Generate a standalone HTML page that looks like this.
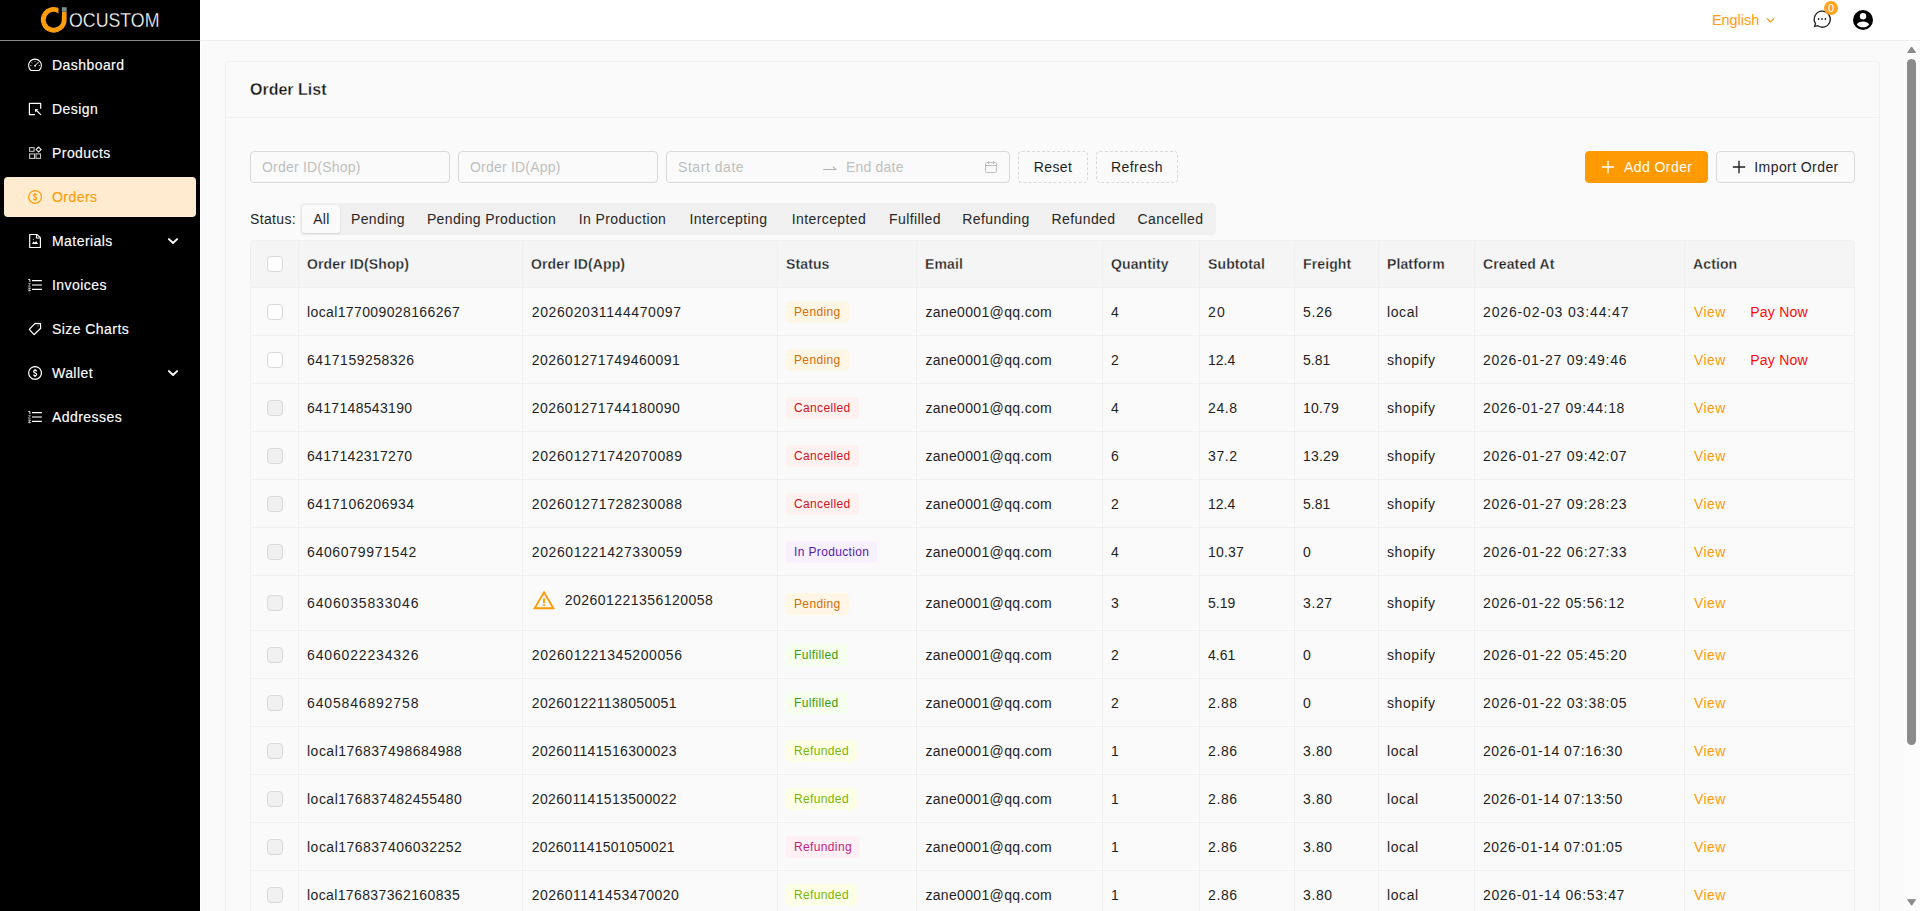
<!DOCTYPE html>
<html lang="en">
<head>
<meta charset="utf-8">
<title>Order List</title>
<style>
*{box-sizing:border-box;margin:0;padding:0}
html,body{width:1920px;height:911px;overflow:hidden}
body{font-family:"Liberation Sans",sans-serif;font-size:14px;color:#1f1f1f;background:#fafafa;position:relative}
a{text-decoration:none;cursor:pointer}
/* sidebar */
.side{position:absolute;left:0;top:0;width:200px;height:911px;background:#000;color:#fff}
.logo{height:41px;border-bottom:1px solid #8a8a8a;position:relative}
.logo svg{position:absolute;left:0;top:0}
.menu{padding-top:0}
.mi{position:relative;height:40px;margin:4px 4px;border-radius:4px;display:flex;align-items:center;padding-left:24px;font-size:14px;color:#fff;letter-spacing:0.44px;-webkit-text-stroke:0.14px currentColor}
.mi svg.ic{width:14px;height:14px;flex:none;margin-right:10px}
.mi.act{background:#ffebcf;color:#ff9d0a}
.mi .arr{position:absolute;left:163px;top:16px;width:12px;height:8px}
/* header */
.hdr{position:absolute;left:200px;top:0;width:1720px;height:41px;background:#fff;border-bottom:1px solid #efefef}
.lang{position:absolute;left:1512px;top:0;line-height:40px;color:#ff9a0a;font-size:14.4px}
/* main */
.main{position:absolute;left:200px;top:41px;width:1704px;height:870px;background:#fafafa;border-left:1px solid #fff;border-top-left-radius:5px}
.card{position:absolute;left:24px;top:20px;width:1655px;height:900px;border:1px solid #f0f0f0;border-bottom:none;border-radius:4px 4px 0 0;background:#fafafa}
.chead{height:56px;border-bottom:1px solid #f0f0f0;padding-left:24px;line-height:55px;font-size:16px;font-weight:700;color:#141414;-webkit-text-stroke:0.3px #fafafa}
.tools{position:absolute;left:24px;top:89px;height:32px;width:1605px}
.inp{position:absolute;top:0;height:32px;border:1px solid #d9d9d9;border-radius:4px;color:#bfbfbf;line-height:30px;padding-left:11px;font-size:14px;letter-spacing:0.2px;background:#fafafa}
.btn{position:absolute;top:0;height:32px;border:1px solid #d9d9d9;border-radius:4px;line-height:30px;text-align:center;font-size:14px;color:#1f1f1f;background:#fafafa;letter-spacing:0.42px}
.btn.dash{border-style:dashed}
.btn.pri{background:#ff9a03;border-color:#ff9a03;color:#fff}
.status{position:absolute;left:24px;top:141px;height:32px;line-height:32px;font-size:14px;letter-spacing:0.35px}
.seg{position:absolute;left:50px;top:0;height:32px;width:916px;background:#f0f0f0;border-radius:4px;padding:2px;display:flex}
.seg span{height:28px;line-height:28px;text-align:center;border-radius:3px;padding-left:1px;letter-spacing:0.39px;color:#262626;flex:none}
.seg span.on{background:#fafafa;box-shadow:0 1px 2px rgba(0,0,0,.1),0 0 2px rgba(0,0,0,.05)}
/* table */
.tbl{position:absolute;left:24px;top:178px;width:1605px;border-left:1px solid #f0f0f0;border-top:1px solid #f0f0f0;border-radius:4px 4px 0 0;overflow:hidden}
table{border-collapse:separate;border-spacing:0;table-layout:fixed;width:1604px}
th,td{border-right:1px solid #f0f0f0;border-bottom:1px solid #f0f0f0;padding:0 8px;text-align:left;height:48px;font-size:14px;vertical-align:middle;white-space:nowrap}
th{height:47px;background:#f5f5f5;font-weight:700;color:#1f1f1f;letter-spacing:0.12px;-webkit-text-stroke:0.28px #f5f5f5}
th .cb{position:relative;top:-1px}
td{color:#1f1f1f;letter-spacing:0.44px}
td:nth-child(3){letter-spacing:0.58px}
td:nth-child(5){letter-spacing:0.34px}
td:nth-child(9){letter-spacing:0.6px}
td:nth-child(10){letter-spacing:0.87px}
td:nth-child(11){letter-spacing:0.25px;padding-left:9px}
td:nth-child(3){padding-left:8.8px}
td:nth-child(5){padding-left:8.4px}
tr.tall td{height:55px}
tr.tall .cb{position:relative;top:-1px}
tr.tall .tag{position:relative;top:1px}
.c0{text-align:center;padding:0}
.cb{display:inline-block;width:16px;height:16px;border:1px solid #d9d9d9;border-radius:4px;background:#fff;vertical-align:middle}
.cb.dis{background:#f0f0f0}
.tag{display:inline-block;height:22px;line-height:22px;padding:0 8px;font-size:12px;border-radius:4px;letter-spacing:0.36px}
.t-orange{color:#d46b08;background:#fff7e6}
.t-red{color:#cf1322;background:#fff1f0}
.t-purple{color:#531dab;background:#f9f0ff}
.t-green{color:#389e0d;background:#f6ffed}
.t-lime{color:#7cb305;background:#fcffe6}
.t-magenta{color:#c41d7f;background:#fff0f6}
.view{color:#ff9a0a;letter-spacing:0.45px}
.pay{color:#ff0a0a;margin-left:24.3px}
.warnwrap{display:inline-flex;align-items:flex-start;position:relative;left:1px}
.warn{position:relative;top:-2px}
.wtxt{position:relative;top:1px}
.warn{margin-right:10px}
/* scrollbar */
.sb{position:absolute;left:1904px;top:41px;width:16px;height:870px;background:#fcfcfc}
.sb .thumb{position:absolute;left:3px;top:18px;width:9px;height:686px;border-radius:5px;background:#8b8b8b}
</style>
</head>
<body>
<div class="side">
  <div class="logo">
    <svg width="200" height="40" viewBox="0 0 200 40">
      <path d="M60.5 11.8 A10.45 10.45 0 1 0 64.2 19.75 V11.8" fill="none" stroke="#ff9d0a" stroke-width="4.8" stroke-linecap="butt"/><rect x="58.5" y="0" width="3.3" height="16.5" fill="#000"/>
      <rect x="61.9" y="7.2" width="4.8" height="4.6" fill="#7f8c87"/>
      <text x="69" y="26.6" font-family="Liberation Sans, sans-serif" font-size="19.5" fill="#fff" stroke="#000" stroke-width="0.3" textLength="90.5" lengthAdjust="spacingAndGlyphs">OCUSTOM</text>
    </svg>
  </div>
  <div class="menu">
    <div class="mi"><svg class="ic" viewBox="0 0 14 14"><path d="M3 12.5 A6.4 6.4 0 1 1 11 12.5 Z" fill="none" stroke="#fff" stroke-width="1.1" stroke-linejoin="round"/><path d="M7 7.7 L10.7 3.9" stroke="#fff" stroke-width="1"/><circle cx="7.1" cy="7.7" r="0.95" fill="#fff"/><path d="M2.2 7.6 H3.4 M10.8 7.6 H12 M7 2.9 V3.8 M3.4 4.3 L4.3 5" stroke="#ddd" stroke-width="0.9"/></svg>Dashboard</div>
    <div class="mi"><svg class="ic" viewBox="0 0 14 14"><path d="M6.9 12.6 H1.4 V1.4 H12.7 V6.7" fill="none" stroke="#fff" stroke-width="1.2" stroke-linejoin="round"/><path d="M8.2 8.3 L13 12.9" stroke="#fff" stroke-width="1.2"/><path d="M6.9 7 L10.3 7.2 L7.1 10.2Z" fill="#fff"/></svg>Design</div>
    <div class="mi"><svg class="ic" viewBox="0 0 14 14"><rect x="1.6" y="1.6" width="4.5" height="3.7" fill="none" stroke="#c4c4c4" stroke-width="1.1"/><rect x="1.6" y="7.9" width="4.9" height="4.5" fill="none" stroke="#c4c4c4" stroke-width="1.1"/><rect x="8" y="7.9" width="4.5" height="4.5" fill="none" stroke="#c4c4c4" stroke-width="1.1"/><path d="M10.6 1.1 L13.1 3.6 L10.6 6.1 L8.1 3.6Z" fill="none" stroke="#fff" stroke-width="1.05"/></svg>Products</div>
    <div class="mi act"><svg class="ic" viewBox="0 0 14 14"><circle cx="7.05" cy="6.95" r="6.4" fill="none" stroke="#ff9d0a" stroke-width="1.2"/><path d="M8.6 5.4 C8.4 4.1 5.6 4.1 5.6 5.6 C5.6 7 8.6 6.8 8.6 8.4 C8.6 9.9 5.7 9.9 5.4 8.6" fill="none" stroke="#ff9d0a" stroke-width="1.25"/><path d="M7.05 3.1 V4.3 M7.05 9.7 V10.9" stroke="#ff9d0a" stroke-width="1.2"/></svg>Orders</div>
    <div class="mi"><svg class="ic" viewBox="0 0 14 14" style="overflow:visible"><path d="M1.7 0.5 H8.8 L12.4 3.6 V13.5 H1.7Z" fill="none" stroke="#fff" stroke-width="1.15" stroke-linejoin="round"/><path d="M8.4 0.6 V4 H12.3" fill="none" stroke="#fff" stroke-width="1.05"/><path d="M4 9.9 L5.7 7.3 L6.8 8.7 L8 6.9 L10.1 9.9Z" fill="#fff"/><circle cx="5.3" cy="5.5" r="0.55" fill="#ccc"/></svg>Materials<svg class="arr" viewBox="0 0 12 8"><path d="M1.9 2.1 L6 6 L10.1 2.1" fill="none" stroke="#fff" stroke-width="1.9" stroke-linecap="round" stroke-linejoin="round"/></svg></div>
    <div class="mi"><svg class="ic" viewBox="0 0 14 14"><path d="M4 2.6 H13.9 M4 11.4 H13.9" stroke="#fff" stroke-width="1.1"/><path d="M4 7 H13.9" stroke="#fff" stroke-width="1.1"/><path d="M0.2 1.5 H1.9 V4.1" fill="none" stroke="#fff" stroke-width="0.9"/><path d="M0.4 5.6 H2.4 L0.4 8.3 H2.6" fill="none" stroke="#bbb" stroke-width="0.8"/><path d="M0.3 10.1 H2.4 L1.2 11.4 L2.4 12.7 H0.3" fill="none" stroke="#fff" stroke-width="0.9"/></svg>Invoices</div>
    <div class="mi"><svg class="ic" viewBox="0 0 14 14"><path d="M7.1 1.3 L12.4 1.6 L12.7 6.3 L6 12.7 L1.3 7.4Z" fill="none" stroke="#fff" stroke-width="1.2" stroke-linejoin="round"/><circle cx="10.1" cy="3.9" r="0.65" fill="#999"/></svg>Size Charts</div>
    <div class="mi"><svg class="ic" viewBox="0 0 14 14"><circle cx="7.05" cy="6.95" r="6.4" fill="none" stroke="#fff" stroke-width="1.2"/><path d="M8.6 5.4 C8.4 4.1 5.6 4.1 5.6 5.6 C5.6 7 8.6 6.8 8.6 8.4 C8.6 9.9 5.7 9.9 5.4 8.6" fill="none" stroke="#fff" stroke-width="1.25"/><path d="M7.05 3.1 V4.3 M7.05 9.7 V10.9" stroke="#fff" stroke-width="1.2"/></svg>Wallet<svg class="arr" viewBox="0 0 12 8"><path d="M1.9 2.1 L6 6 L10.1 2.1" fill="none" stroke="#fff" stroke-width="1.9" stroke-linecap="round" stroke-linejoin="round"/></svg></div>
    <div class="mi"><svg class="ic" viewBox="0 0 14 14"><path d="M4 2.6 H13.9 M4 11.4 H13.9" stroke="#fff" stroke-width="1.1"/><path d="M4 7 H13.9" stroke="#fff" stroke-width="1.1"/><path d="M0.2 1.5 H1.9 V4.1" fill="none" stroke="#fff" stroke-width="0.9"/><path d="M0.4 5.6 H2.4 L0.4 8.3 H2.6" fill="none" stroke="#bbb" stroke-width="0.8"/><path d="M0.3 10.1 H2.4 L1.2 11.4 L2.4 12.7 H0.3" fill="none" stroke="#fff" stroke-width="0.9"/></svg>Addresses</div>
  </div>
</div>
<div class="hdr">
  <span class="lang">English</span>
  <svg style="position:absolute;left:1566px;top:16px" width="9" height="9" viewBox="0 0 9 9"><path d="M1 2.5 L4.5 6 L8 2.5" fill="none" stroke="#ff9a0a" stroke-width="1.1"/></svg>
  <svg style="position:absolute;left:1612px;top:9px" width="20" height="20" viewBox="0 0 20 20"><path d="M10 2.2 A8 8 0 1 1 5.5 16.6 L2.6 17.4 L3.5 14.5 A8 8 0 0 1 10 2.2Z" fill="none" stroke="#222" stroke-width="1.3"/><circle cx="6.6" cy="10" r="0.9" fill="#222"/><circle cx="10" cy="10" r="0.9" fill="#222"/><circle cx="13.4" cy="10" r="0.9" fill="#222"/></svg>
  <span style="position:absolute;left:1624px;top:1px;width:14px;height:14px;border-radius:7px;background:#ffa41c;color:#fff;font-size:11px;line-height:14px;text-align:center">0</span>
  <svg style="position:absolute;left:1653px;top:10px" width="20" height="20" viewBox="0 0 20 20"><circle cx="10" cy="10" r="10" fill="#000"/><circle cx="10.05" cy="6.3" r="3.2" fill="#fff"/><path d="M3.8 14.4 C6 10.6 14 10.6 16.2 14.4 C14.6 16.4 12.2 17.2 10 17.2 C7.8 17.2 5.4 16.4 3.8 14.4Z" fill="#fff"/></svg>
</div>
<div class="main">
  <div class="card">
    <div class="chead">Order List</div>
    <div class="tools">
      <div class="inp" style="left:0;width:200px">Order ID(Shop)</div>
      <div class="inp" style="left:208px;width:200px">Order ID(App)</div>
      <div class="inp" style="left:416px;width:344px"><span style="letter-spacing:0.55px">Start date</span><svg style="position:absolute;left:156px;top:12px" width="14" height="8" viewBox="0 0 14 8"><path d="M0.3 5.5 H13 L9.8 2.6" fill="none" stroke="#b4b4b4" stroke-width="1.1"/></svg><span style="position:absolute;left:179px;top:0">End date</span>
        <svg style="position:absolute;left:317px;top:8px" width="14" height="14" viewBox="0 0 14 14"><rect x="1.5" y="2.5" width="11" height="10" rx="1" fill="none" stroke="#bfbfbf" stroke-width="1"/><path d="M1.5 5.5H12.5M4.5 1V4M9.5 1V4" stroke="#bfbfbf" stroke-width="1"/></svg>
      </div>
      <div class="btn dash" style="left:768px;width:70px">Reset</div>
      <div class="btn dash" style="left:846px;width:82px">Refresh</div>
      <div class="btn pri" style="left:1335px;width:123px"><svg width="14" height="14" viewBox="0 0 14 14" style="vertical-align:-2px;margin-right:9.5px"><path d="M7 0.8V13.2M0.8 7H13.2" stroke="#fff" stroke-width="1.35"/></svg>Add Order</div>
      <div class="btn" style="left:1466px;width:139px"><svg width="14" height="14" viewBox="0 0 14 14" style="vertical-align:-2px;margin-right:8px"><path d="M7 0.8V13.2M0.8 7H13.2" stroke="#1f1f1f" stroke-width="1.35"/></svg>Import Order</div>
    </div>
    <div class="status">Status:
      <div class="seg"><span class="on" style="width:38px">All</span><span style="width:75px">Pending</span><span style="width:152px">Pending Production</span><span style="width:110px">In Production</span><span style="width:102px">Intercepting</span><span style="width:99px">Intercepted</span><span style="width:73px">Fulfilled</span><span style="width:89px">Refunding</span><span style="width:86px">Refunded</span><span style="width:88px">Cancelled</span></div>
    </div>
    <div class="tbl">
      <table>
        <colgroup><col style="width:48px"><col style="width:224px"><col style="width:255px"><col style="width:139px"><col style="width:186px"><col style="width:97px"><col style="width:95px"><col style="width:84px"><col style="width:96px"><col style="width:210px"><col style="width:170px"></colgroup>
        <thead><tr><th class="c0"><span class="cb"></span></th><th>Order ID(Shop)</th><th>Order ID(App)</th><th>Status</th><th>Email</th><th>Quantity</th><th>Subtotal</th><th>Freight</th><th>Platform</th><th>Created At</th><th>Action</th></tr></thead>
        <tbody>
<tr><td class="c0"><span class="cb"></span></td><td><span style="letter-spacing:0.38px">local177009028166267</span></td><td><span style="letter-spacing:0.59px">202602031144470097</span></td><td><span class="tag t-orange">Pending</span></td><td>zane0001@qq.com</td><td><span style="letter-spacing:0.81px">4</span></td><td><span style="letter-spacing:1.09px">20</span></td><td><span style="letter-spacing:0.61px">5.26</span></td><td>local</td><td><span style="letter-spacing:0.86px">2026-02-03 03:44:47</span></td><td><a class="view">View</a><a class="pay">Pay Now</a></td></tr>
<tr><td class="c0"><span class="cb"></span></td><td><span style="letter-spacing:0.49px">6417159258326</span></td><td><span style="letter-spacing:0.46px">202601271749460091</span></td><td><span class="tag t-orange">Pending</span></td><td>zane0001@qq.com</td><td><span style="letter-spacing:0.81px">2</span></td><td><span style="letter-spacing:-0.01px">12.4</span></td><td><span style="letter-spacing:-0.01px">5.81</span></td><td>shopify</td><td><span style="letter-spacing:0.75px">2026-01-27 09:49:46</span></td><td><a class="view">View</a><a class="pay">Pay Now</a></td></tr>
<tr><td class="c0"><span class="cb dis"></span></td><td><span style="letter-spacing:0.32px">6417148543190</span></td><td><span style="letter-spacing:0.46px">202601271744180090</span></td><td><span class="tag t-red">Cancelled</span></td><td>zane0001@qq.com</td><td><span style="letter-spacing:0.81px">4</span></td><td><span style="letter-spacing:0.61px">24.8</span></td><td><span style="letter-spacing:0.17px">10.79</span></td><td>shopify</td><td><span style="letter-spacing:0.63px">2026-01-27 09:44:18</span></td><td><a class="view">View</a></td></tr>
<tr><td class="c0"><span class="cb dis"></span></td><td><span style="letter-spacing:0.32px">6417142317270</span></td><td><span style="letter-spacing:0.59px">202601271742070089</span></td><td><span class="tag t-red">Cancelled</span></td><td>zane0001@qq.com</td><td><span style="letter-spacing:0.81px">6</span></td><td><span style="letter-spacing:0.61px">37.2</span></td><td><span style="letter-spacing:0.17px">13.29</span></td><td>shopify</td><td><span style="letter-spacing:0.75px">2026-01-27 09:42:07</span></td><td><a class="view">View</a></td></tr>
<tr><td class="c0"><span class="cb dis"></span></td><td><span style="letter-spacing:0.49px">6417106206934</span></td><td><span style="letter-spacing:0.59px">202601271728230088</span></td><td><span class="tag t-red">Cancelled</span></td><td>zane0001@qq.com</td><td><span style="letter-spacing:0.81px">2</span></td><td><span style="letter-spacing:-0.01px">12.4</span></td><td><span style="letter-spacing:-0.01px">5.81</span></td><td>shopify</td><td><span style="letter-spacing:0.75px">2026-01-27 09:28:23</span></td><td><a class="view">View</a></td></tr>
<tr><td class="c0"><span class="cb dis"></span></td><td><span style="letter-spacing:0.67px">6406079971542</span></td><td><span style="letter-spacing:0.59px">202601221427330059</span></td><td><span class="tag t-purple">In Production</span></td><td>zane0001@qq.com</td><td><span style="letter-spacing:0.81px">4</span></td><td><span style="letter-spacing:0.17px">10.37</span></td><td><span style="letter-spacing:0.81px">0</span></td><td>shopify</td><td><span style="letter-spacing:0.75px">2026-01-22 06:27:33</span></td><td><a class="view">View</a></td></tr>
<tr class="tall"><td class="c0"><span class="cb dis"></span></td><td><span style="letter-spacing:0.85px">6406035833046</span></td><td><span class="warnwrap"><svg class="warn" viewBox="0 0 24 24" width="22" height="22"><path d="M12 3.6 L22.2 21 H1.8 Z" fill="none" stroke="#ff9900" stroke-width="2" stroke-linejoin="miter"/><rect x="11" y="10" width="2" height="5.4" fill="#ff9900"/><rect x="11" y="16.6" width="2" height="2" fill="#ff9900"/></svg><span class="wtxt"><span style="letter-spacing:0.46px">202601221356120058</span></span></span></td><td><span class="tag t-orange">Pending</span></td><td>zane0001@qq.com</td><td><span style="letter-spacing:0.81px">3</span></td><td><span style="letter-spacing:-0.01px">5.19</span></td><td><span style="letter-spacing:0.61px">3.27</span></td><td>shopify</td><td><span style="letter-spacing:0.63px">2026-01-22 05:56:12</span></td><td><a class="view">View</a></td></tr>
<tr><td class="c0"><span class="cb dis"></span></td><td><span style="letter-spacing:0.85px">6406022234326</span></td><td><span style="letter-spacing:0.59px">202601221345200056</span></td><td><span class="tag t-green">Fulfilled</span></td><td>zane0001@qq.com</td><td><span style="letter-spacing:0.81px">2</span></td><td><span style="letter-spacing:-0.01px">4.61</span></td><td><span style="letter-spacing:0.81px">0</span></td><td>shopify</td><td><span style="letter-spacing:0.75px">2026-01-22 05:45:20</span></td><td><a class="view">View</a></td></tr>
<tr><td class="c0"><span class="cb dis"></span></td><td><span style="letter-spacing:0.85px">6405846892758</span></td><td><span style="letter-spacing:0.33px">202601221138050051</span></td><td><span class="tag t-green">Fulfilled</span></td><td>zane0001@qq.com</td><td><span style="letter-spacing:0.81px">2</span></td><td><span style="letter-spacing:0.61px">2.88</span></td><td><span style="letter-spacing:0.81px">0</span></td><td>shopify</td><td><span style="letter-spacing:0.75px">2026-01-22 03:38:05</span></td><td><a class="view">View</a></td></tr>
<tr><td class="c0"><span class="cb dis"></span></td><td><span style="letter-spacing:0.49px">local176837498684988</span></td><td><span style="letter-spacing:0.33px">202601141516300023</span></td><td><span class="tag t-lime">Refunded</span></td><td>zane0001@qq.com</td><td><span style="letter-spacing:-1.39px">1</span></td><td><span style="letter-spacing:0.61px">2.86</span></td><td><span style="letter-spacing:0.61px">3.80</span></td><td>local</td><td><span style="letter-spacing:0.51px">2026-01-14 07:16:30</span></td><td><a class="view">View</a></td></tr>
<tr><td class="c0"><span class="cb dis"></span></td><td><span style="letter-spacing:0.49px">local176837482455480</span></td><td><span style="letter-spacing:0.33px">202601141513500022</span></td><td><span class="tag t-lime">Refunded</span></td><td>zane0001@qq.com</td><td><span style="letter-spacing:-1.39px">1</span></td><td><span style="letter-spacing:0.61px">2.86</span></td><td><span style="letter-spacing:0.61px">3.80</span></td><td>local</td><td><span style="letter-spacing:0.51px">2026-01-14 07:13:50</span></td><td><a class="view">View</a></td></tr>
<tr><td class="c0"><span class="cb dis"></span></td><td><span style="letter-spacing:0.49px">local176837406032252</span></td><td><span style="letter-spacing:0.21px">202601141501050021</span></td><td><span class="tag t-magenta">Refunding</span></td><td>zane0001@qq.com</td><td><span style="letter-spacing:-1.39px">1</span></td><td><span style="letter-spacing:0.61px">2.86</span></td><td><span style="letter-spacing:0.61px">3.80</span></td><td>local</td><td><span style="letter-spacing:0.51px">2026-01-14 07:01:05</span></td><td><a class="view">View</a></td></tr>
<tr><td class="c0"><span class="cb dis"></span></td><td><span style="letter-spacing:0.38px">local176837362160835</span></td><td><span style="letter-spacing:0.46px">202601141453470020</span></td><td><span class="tag t-lime">Refunded</span></td><td>zane0001@qq.com</td><td><span style="letter-spacing:-1.39px">1</span></td><td><span style="letter-spacing:0.61px">2.86</span></td><td><span style="letter-spacing:0.61px">3.80</span></td><td>local</td><td><span style="letter-spacing:0.63px">2026-01-14 06:53:47</span></td><td><a class="view">View</a></td></tr>
        </tbody>
      </table>
    </div>
  </div>
</div>
<div class="sb">
  <svg style="position:absolute;left:3px;top:4.8px" width="9.2" height="7.2" viewBox="0 0 9.2 7.2"><path d="M4.6 0.9 L8.5 6.5 H0.7Z" fill="#8b8b8b" stroke="#8b8b8b" stroke-width="1" stroke-linejoin="round"/></svg>
  <div class="thumb"></div>
  <svg style="position:absolute;left:3px;top:858px" width="9.2" height="7.2" viewBox="0 0 9.2 7.2"><path d="M4.6 6.3 L8.5 0.7 H0.7Z" fill="#8b8b8b" stroke="#8b8b8b" stroke-width="1" stroke-linejoin="round"/></svg>
</div>
</body>
</html>
